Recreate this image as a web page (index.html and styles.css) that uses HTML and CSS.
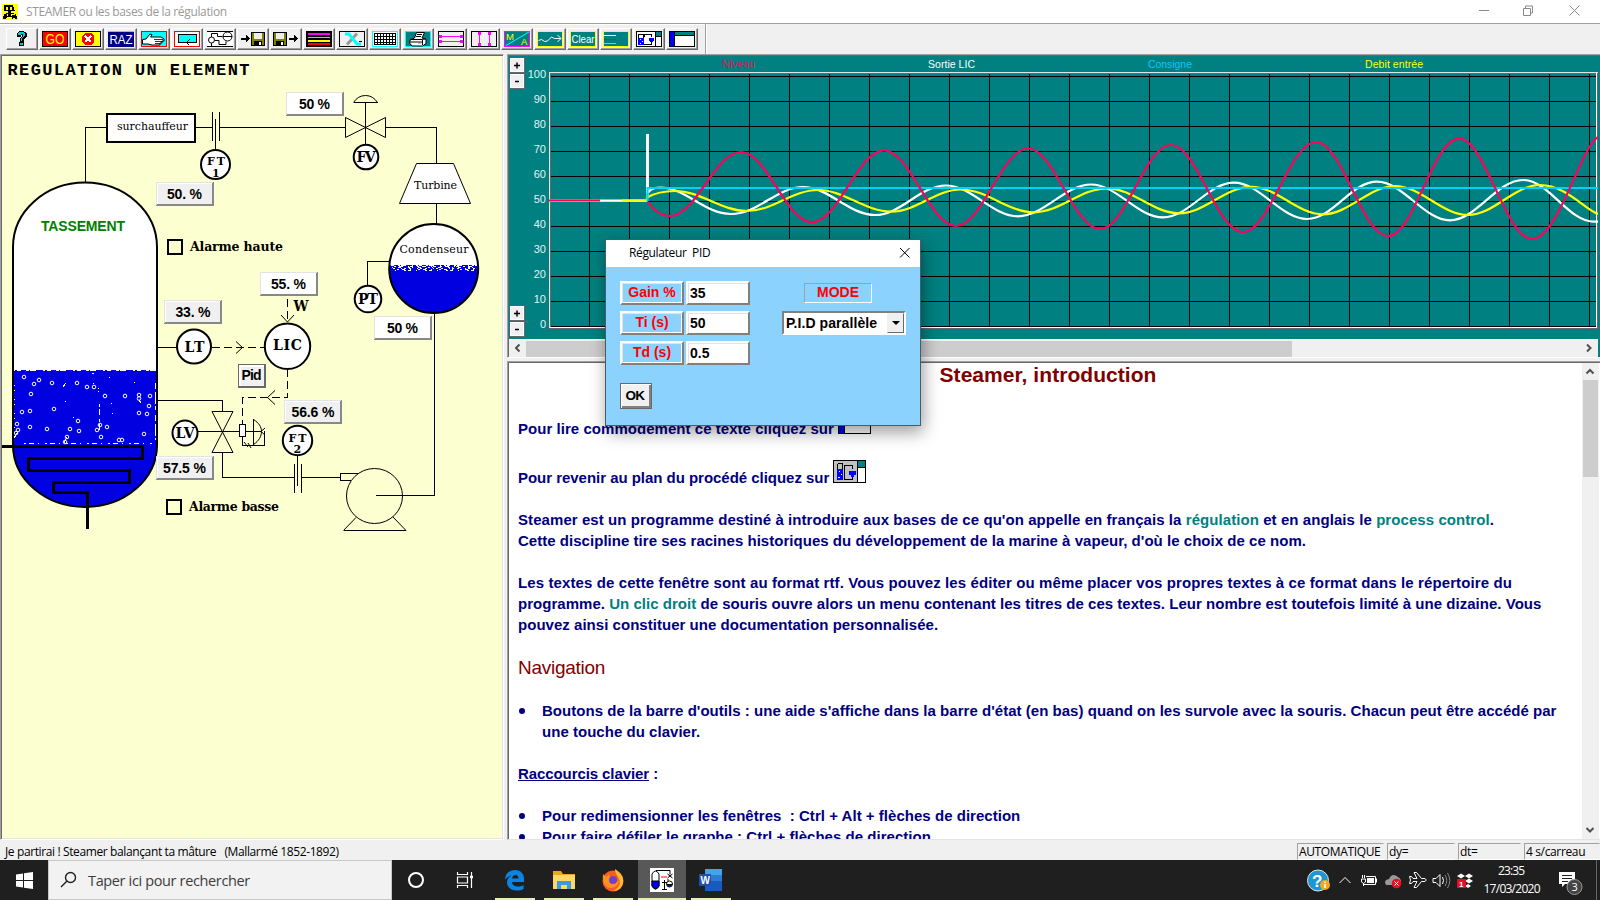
FILE: index.html
```html
<!DOCTYPE html>
<html lang="fr">
<head>
<meta charset="utf-8">
<title>STEAMER ou les bases de la régulation</title>
<link rel="stylesheet" href="styles.css">
</head>
<body>
<div class="screen">
<header class="titlebar">
  <svg class="app-icon" width="16" height="16" shape-rendering="crispEdges"><rect width="16" height="16" fill="#ff0"/><path d="M2 1h9v2H2zM6 3h2v3H6zM2 3h2v3H2zM10 3h2v4h-2zM2 6h11v1H2zM6 7h3v5H6zM4 9h8v1H4zM1 12h1v-2h3v4H4v1H1zM10 11h3v-1h1v2h1v3h-2v-1h-2v1h-1zM5 12h5v1H5z"/></svg>
  <span class="app-title">STEAMER ou les bases de la régulation</span>
  <svg class="win-controls" width="130" height="22" fill="none" stroke="#8a8a8a"><path d="M9 10.500h10M53.500 8.500h7v7h-7zM55.500 8v-2h7v7h-2M99.500 5.500l10 10M109.500 5.500l-10 10" transform="translate(0 -1)"/></svg>
</header>
<div class="toolbar">
  <div class="tools">
    <button class="tool"><svg viewBox="0 0 26 16"><path d="M8 5V2h1V1h1V0h5v1h2v1h1v4h-1v1h-1v1h-1v3h-4V7h1V6h1V4h-1v2H8zM10 11h5v4h-5z" fill="#000"/><path d="M9 4V2h1V1h5v1h1v3h-1v1h-1v1h-1v3h-1V7h1V6h1V3h-2v1zM11 12h3v2h-3z" fill="#0cc"/></svg></button>
    <button class="tool"><svg viewBox="0 0 26 16"><rect x=".5" y=".5" width="25" height="15" fill="red" stroke="#000"/><text x="3.500" y="13" class="t-go" textLength="19" lengthAdjust="spacingAndGlyphs">GO</text></svg></button>
    <button class="tool"><svg viewBox="0 0 26 16"><rect x=".5" y=".5" width="25" height="15" fill="#ff0" stroke="#000"/><path d="M10 2h6l3 3v6l-3 3h-6l-3-3V5z" fill="red"/><path d="M10 5l6 6M16 5l-6 6" stroke="#fff" stroke-width="2"/></svg></button>
    <button class="tool"><svg viewBox="0 0 26 16"><rect width="26" height="16" fill="#000080"/><path d="M0 .5h26" stroke="#0ff"/><text x="1.500" y="13" class="t-raz" textLength="23" lengthAdjust="spacingAndGlyphs">RAZ</text></svg></button>
    <button class="tool"><svg viewBox="0 0 26 16"><rect x=".5" y=".5" width="25" height="15" fill="#0ff" stroke="red"/><path class="aa" d="M1.500 8.500L5 8l4-5 2 .5L9.500 6H20l3 2v2h-2v2h-2v2h-8l-4-1H1.500z" fill="#fff" stroke="#000"/><path d="M13 8.500h9M14 10.500h7M14 12.500h5" stroke="#000" stroke-width=".8"/></svg></button>
    <button class="tool"><svg viewBox="0 0 26 16"><rect x=".5" y=".5" width="25" height="15" fill="#fff" stroke="red"/><rect x="4.500" y="3.500" width="18" height="8" fill="#0ff" stroke="#000"/><path d="M11 11.500h6M15.500 8.500l-3 3 3 3" stroke="#000" fill="none"/></svg></button>
    <button class="tool"><svg viewBox="0 0 26 16" class="aa"><rect width="26" height="16" fill="#fff"/><path d="M0 .5h26M0 15.500h26M8 9.500h4v4h7v-3M4.500 6V2.500h6v3h5M16 5.500h9" stroke="#000" fill="none"/><circle cx="4.500" cy="9" r="3" fill="#fff" stroke="#000"/><circle cx="20.500" cy="5.500" r="4.500" fill="none" stroke="#000"/><path d="M4.500 12v3" stroke="#000"/></svg></button>
    <button class="tool"><svg viewBox="0 0 26 16"><path d="M1 7h5V4h1v1h1v1h1v1h1v1H9v1H8v1H7v1H6V9H1z"/><rect x="11.500" y="1.500" width="13" height="13" fill="#808000" stroke="#000"/><path d="M14 2h8v6h-8z" fill="#eee"/><path d="M14 10h8v5h-8z"/><path d="M19 11h2v3h-2z" fill="#fff"/></svg></button>
    <button class="tool"><svg viewBox="0 0 26 16"><path d="M16 7h5V4h1v1h1v1h1v1h1v1h-1v1h-1v1h-1v1h-1V9h-5z"/><rect x=".5" y="1.500" width="13" height="13" fill="#808000" stroke="#000"/><path d="M3 2h8v6H3z" fill="#eee"/><path d="M3 10h8v5H3z"/><path d="M8 11h2v3H8z" fill="#fff"/></svg></button>
    <button class="tool"><svg viewBox="0 0 26 16"><rect width="26" height="16"/><path d="M2 3h22" stroke="#f0f" stroke-width="2"/><path d="M2 6.500h22" stroke="#0ff" stroke-width="1"/><path d="M2 10h22" stroke="#ff0" stroke-width="2"/><path d="M2 13h22" stroke="red" stroke-width="2"/></svg></button>
    <button class="tool"><svg viewBox="0 0 26 16"><rect x=".5" y=".5" width="25" height="15" fill="#f0f0f0" stroke="#000"/><g class="aa"><path d="M18 2.500L8 13.500" stroke="#999" stroke-width="3"/><path d="M6 3h4l8 10h4" stroke="#0ff" stroke-width="3" fill="none"/></g><path d="M20 10.500h3" stroke="#000"/></svg></button>
    <button class="tool"><svg viewBox="0 0 26 16"><rect x=".5" y=".5" width="25" height="15" fill="#fff" stroke="#0ff"/><path d="M2 2.500h22M2 5.500h22M2 8.500h22M2 11.500h22M2 13.500h22M2.500 2v12M5.500 2v12M8.500 2v12M11.500 2v12M14.500 2v12M17.500 2v12M20.500 2v12M23.500 2v12" stroke="#000"/></svg></button>
    <button class="tool"><svg viewBox="0 0 26 16"><rect x=".5" y=".5" width="25" height="15" fill="#008080" stroke="#0ff"/><g class="aa"><path d="M9.500 7l2-5.500h8L17 7l4 1.500v4L17.500 15H7l-2-2.500V9z" fill="#fff" stroke="#000"/><path d="M12 3.500h5M11 5.500h5M5.500 8.500h12l3-1M5.500 11h12M17.500 9v5" stroke="#000" fill="none"/><path d="M13 12.500h3" stroke="#dd0"/></g></svg></button>
    <button class="tool"><svg viewBox="0 0 26 16"><rect x=".5" y=".5" width="25" height="15" fill="#f0f0f0" stroke="#000"/><path d="M2 5.500h22M2 10.500h22" stroke="#f0f"/><path d="M1 4h3v3H1zM22 4h3v3h-3zM1 9h3v3H1zM22 9h3v3h-3z" fill="#f0f"/></svg></button>
    <button class="tool"><svg viewBox="0 0 26 16"><rect x=".5" y=".5" width="25" height="15" fill="#f0f0f0" stroke="#000"/><path d="M8.500 2v12M18.500 2v12" stroke="#f0f"/><path d="M7 1h3v3H7zM17 1h3v3h-3zM7 12h3v3H7zM17 12h3v3h-3z" fill="#f0f"/></svg></button>
    <button class="tool"><svg viewBox="0 0 26 16"><rect x=".5" y=".5" width="25" height="15" fill="#008080" stroke="#f0f"/><path class="aa" d="M2 14.500L25 1" stroke="#0ff"/><text x="2" y="9" class="t-ma">M</text><text x="17" y="14" class="t-ma">A</text></svg></button>
    <button class="tool"><svg viewBox="0 0 26 16"><rect x=".5" y=".5" width="25" height="15" fill="#008080" stroke="#ff0"/><path class="aa" d="M1.500 9.500l3-1 3 2 3-.5 4-4 3 1.500h6M20.500 4l3.500 3.500-3.500 3.500" stroke="#fff" fill="none"/></svg></button>
    <button class="tool"><svg viewBox="0 0 26 16"><rect x=".5" y=".5" width="25" height="15" fill="#008080" stroke="#ff0"/><text x="1.500" y="12" class="t-clear" textLength="23" lengthAdjust="spacingAndGlyphs">Clear</text></svg></button>
    <button class="tool"><svg viewBox="0 0 26 16"><rect x=".5" y=".5" width="25" height="15" fill="#008080" stroke="#ff0"/><path d="M1 4.500h12" stroke="#fff"/><path d="M1 8.500h12" stroke="red"/><path d="M1 12.500h12" stroke="#0ff"/></svg></button>
    <button class="tool"><svg viewBox="0 0 26 16"><rect x=".5" y=".5" width="25" height="15" fill="#fff" stroke="#000"/><path d="M20 1h5v4h-5z" fill="#008080"/><path d="M19.500 1v14M20 5.500h5M8 5.500V3.500h7V6M8 13.500h7V11" stroke="#000" fill="none"/><rect x="2.500" y="3.500" width="5" height="10" fill="#fff" stroke="#000"/><path d="M2 7h6v7H2zM13 7h5v3h-1v1h-3v-1h-1z" fill="#00f"/><path d="M4 8h1v1H4zM6 10h1v1H6zM4 12h1v1H4z" fill="#fff"/></svg></button>
    <button class="tool"><svg viewBox="0 0 26 16"><rect x=".5" y=".5" width="25" height="15" fill="#fff" stroke="#000"/><path d="M1 1h4v14H1z" fill="#00f"/><path d="M6 1h19v3H6z" fill="#008080"/><path d="M5.500 1v14M6 4.500h19" stroke="#000"/></svg></button>
  </div>
</div>
<main class="work">
<section class="process">
<svg width="500" height="783" viewBox="2 56 500 783">
  <text class="title" x="7.500" y="74.500" textLength="242">REGULATION UN ELEMENT</text>
  <path d="M13 247A72 64.500 0 0 1 157 247V445A72 62 0 0 1 13 445Z" fill="#fff"/>
  <path d="M13 371H157V445A72 62 0 0 1 13 445Z" fill="#0000e0"/>
  <path d="M15 370.500H155" stroke="#0000e0" stroke-dasharray="2 4 5 3 1 6 7 2" shape-rendering="crispEdges"/>
  <g class="specks" fill="none" stroke="#fff" shape-rendering="crispEdges">
    <path d="M24 443.500H154" stroke-dasharray="2 3 5 4 1 6"/><path d="M155.500 383V440" stroke-dasharray="6 3 12 2 4 5"/><path d="M99.500 404V430" stroke-dasharray="3 2 6 4"/><path d="M14.500 385V436" stroke-dasharray="1 4 1 8"/><path d="M66 383l-3 4M75 382h1M92 373h2M98 388h1M109 377h1M65 401h1M134 382h1M111 403h1M112 413h1M73 417h1M98 391h1M93 383h1M18 432l-4 6M67 437l-3 6M139 400l2 3"/>
  </g>
  <g class="bubbles"><circle cx="24" cy="377" r="1.800"/><circle cx="34" cy="384" r="1.800"/><circle cx="39" cy="380" r="1.800"/><circle cx="52" cy="383" r="1.800"/><circle cx="31" cy="394" r="1.800"/><circle cx="77" cy="383" r="1.800"/><circle cx="87" cy="387" r="1.800"/><circle cx="94" cy="387" r="1.800"/><circle cx="105" cy="396" r="1.800"/><circle cx="125" cy="396" r="1.800"/><circle cx="139" cy="395" r="1.800"/><circle cx="139" cy="398.500" r="1.800"/><circle cx="150" cy="396" r="1.800"/><circle cx="149" cy="406" r="1.800"/><circle cx="54" cy="409" r="1.800"/><circle cx="22" cy="412" r="1.800"/><circle cx="30" cy="411" r="1.800"/><circle cx="139" cy="413" r="1.800"/><circle cx="147" cy="414" r="1.800"/><circle cx="78" cy="421" r="1.800"/><circle cx="17" cy="424" r="1.800"/><circle cx="18" cy="430" r="1.800"/><circle cx="16" cy="433" r="1.800"/><circle cx="30" cy="427" r="1.800"/><circle cx="47" cy="429" r="1.800"/><circle cx="70" cy="429" r="1.800"/><circle cx="79" cy="431" r="1.800"/><circle cx="100" cy="425" r="1.800"/><circle cx="97" cy="430" r="1.800"/><circle cx="107" cy="427" r="1.800"/><circle cx="144" cy="434" r="1.800"/><circle cx="67" cy="437" r="1.800"/><circle cx="101" cy="437" r="1.800"/><circle cx="119" cy="440" r="1.800"/><circle cx="122" cy="440" r="1.800"/><circle cx="65" cy="442" r="1.800"/></g>
  <path d="M13 247A72 64.500 0 0 1 157 247V445A72 62 0 0 1 13 445Z" class="ln2"/>
  <path d="M2 446.500H142V458.500H28.500V470.500H129.500V482.500H53.500V492.500H87.500V529" fill="none" stroke="#000" stroke-width="3" shape-rendering="crispEdges"/>
  <g class="ln">
    <path d="M85.500 182V127.500H106M196 127.500H212.500M212.500 112V141M219.500 112V141M215.500 119V150M220 127.500H345.500M365.500 102V144M353.500 102.500H378M386 127.500H436.500V163M436.500 203V224M389 261.500H367.500V286M434.500 314V495.500H376M157 347.500H177M157 400.500H222.500V411M198 431.500H261M222.500 452V477.500H294.500M294.500 464V493M301.500 464V493M297.500 455V486M302 477.500H340.500M358 473.500H340.500V480.500H351M343.500 530.500H406M242.500 437V445.500H264.500V431M253.500 419V445"/>
  </g>
  <g class="lna">
    <path d="M345.500 117.500V137.500L385.500 117.500V137.500ZM353.500 102.500Q358 95.500 365.500 95.500T377.500 102.500M212 411.500H233L212 452.500H233ZM356 517.500L343.500 530.500M393 517L406 530.500M253.500 419.500C259 423 261.500 427 261.500 431.500S259 441 253.500 444.500M236 341.500L242.500 347.500 236 353.500M281 315L287.500 322 294 315M275 390.500L267.500 397.500 275 404.500M265 428l-4 3.500 4 3.500M244 442l4 5M248 443l3 5"/>
    <ellipse cx="374.500" cy="496" rx="28" ry="27.500"/>
  </g>
  <g class="ln" stroke-dasharray="8 4"><path d="M212 347.500H264M287.500 299V322M287.500 369V397.500H242.500V424"/></g>
  <rect x="239.500" y="424.500" width="6" height="12" fill="#fff" stroke="#000"/>
  <rect x="107" y="114" width="88" height="28" fill="#fff" stroke="#000" stroke-width="2"/>
  <path d="M416.500 163.500H453.500L470.500 203.500H399.500Z" fill="#fff" stroke="#000"/>
  <circle cx="433.700" cy="268.500" r="44.500" fill="#fff"/>
  <path d="M389.300 271H478.100A44.500 44.500 0 0 1 389.300 271Z" fill="#0000e0"/>
  <g stroke="#0000e0" shape-rendering="crispEdges"><path d="M390 265.500H478" stroke-dasharray="1 3 4 2 1 5 6 1 3 2"/><path d="M390 266.500H478" stroke-dasharray="4 2 3 4 5 1 1 3"/><path d="M390 267.500H478" stroke-dasharray="2 1 5 3 7 2"/><path d="M390 268.500H478" stroke-dasharray="3 2 6 1 2 2"/><path d="M390 269.500H478" stroke-dasharray="7 2 3 3 5 1"/><path d="M390 270.500H478" stroke-dasharray="5 1 8 2 2 3"/></g>
  <g class="inst"><circle class="hollow" cx="433.700" cy="268.500" r="44.500"/><circle cx="215.500" cy="164.500" r="14.500"/><circle cx="366" cy="157" r="12.300"/><circle cx="368" cy="299" r="13.300"/><circle cx="194" cy="346.500" r="17"/><circle cx="287.500" cy="346.300" r="22.700"/><circle cx="185" cy="433" r="12.500"/><circle cx="297.500" cy="440.500" r="14.700"/><rect class="hollow" x="168" y="240" width="14" height="14"/><rect class="hollow" x="167" y="500" width="14" height="14"/></g>
  <g class="ser">
    <g class="thin"><text x="117" y="130" textLength="71">surchauffeur</text><text x="414" y="189" textLength="43">Turbine</text><text x="399.500" y="253" textLength="69">Condenseur</text></g>
    <g class="s12"><text x="207" y="165" textLength="18">FT</text><text x="212" y="176.500">1</text><text x="288.500" y="441.500" textLength="18">FT</text><text x="293.500" y="453">2</text></g>
    <g class="s14"><text x="356.500" y="162" textLength="19">FV</text><text x="358" y="304" textLength="20">PT</text><text x="184.500" y="352" textLength="20">LT</text><text x="273" y="350" textLength="29">LIC</text><text x="175.500" y="437.500" textLength="19">LV</text><text x="293.500" y="311" textLength="15" lengthAdjust="spacingAndGlyphs">W</text></g>
    <g class="s13"><text x="190" y="251" textLength="93">Alarme haute</text><text x="189" y="511" textLength="90">Alarme basse</text></g>
  </g>
  <text x="41" y="231" class="tass" textLength="84">TASSEMENT</text>
  <defs><g id="box"><path d="M0 24V0H58V24Z" fill="#888"/><path d="M0 0H57V1H1V23H0Z" fill="#e3e3e3"/><path d="M1 1H56V22H1Z" fill="#fff"/></g></defs>
  <g class="vals">
    <use href="#box" x="286" y="92"/><use href="#box" x="260" y="272"/><use href="#box" x="374" y="316"/>
    <use href="#box" x="156" y="182"/><path d="M158 184h54v20h-54z"/><use href="#box" x="164" y="300"/><path d="M166 302h54v20h-54z"/><use href="#box" x="156" y="456"/><path d="M158 458h54v20h-54z"/><use href="#box" x="284" y="400"/><path d="M286 402h54v20h-54z"/>
    <text x="299" y="109" textLength="31">50 %</text><text x="271" y="289" textLength="35">55. %</text><text x="387" y="333" textLength="31">50 %</text><text x="167" y="199" textLength="35">50. %</text><text x="175.500" y="317" textLength="35">33. %</text><text x="163" y="473" textLength="43">57.5 %</text><text x="291.500" y="417" textLength="43">56.6 %</text>
    <path class="pb-edge" d="M238 364h28v24h-28z"/><path class="pb-hi" d="M239 365h25v21h-25z"/><path d="M241 367h23v19h-23z"/><text x="241.500" y="380" textLength="20">Pid</text>
  </g>
</svg>
</section>
<div class="right">
<section class="trend">
<svg width="1089" height="283" viewBox="509 56 1089 283">
  <defs><pattern id="grid" x="589" y="76" width="40" height="25" patternUnits="userSpaceOnUse"><path d="M.5 0V25M0 .5H40" stroke="#000" shape-rendering="crispEdges"/></pattern>
  <g id="step"><path d="M0 0h15v15H0z" fill="#696969"/><path d="M0 0h14v14H0z" fill="#fff"/><path d="M1 1h12v12H1z" fill="#f0f0f0"/></g></defs>
  <rect x="551" y="73" width="1046" height="254" fill="url(#grid)"/>
  <g fill="none" shape-rendering="crispEdges"><path d="M549.500 328V72.500H1597.500" stroke="#e3e3e3"/><path d="M550.500 327V73.500H1597" stroke="#696969"/><path d="M550 327.500H1596.500V73" stroke="#fff"/><path d="M549 328.500H1597.500V73" stroke="#696969"/></g>
  <g class="curves">
    <path stroke="#fff" d="M549 200.500H647M647.500 196V134.500V193L651 189.500C654 188 657 187.500 660 187.500C686 187.500 704 214 731 214S777 187 803 187 849 215 875 215 920 185.500 946 185.500 992 216.300 1018 216.300 1065 184.500 1091 184.500 1137 217.300 1163 217.300 1208 182.700 1234 182.700 1281 219 1307 219 1351 181.700 1377 181.700 1424 220.300 1450 220.300 1497 180 1523 180 1568 221.700 1594 221.700H1598"/>
    <path stroke="#fff" stroke-width="3" d="M647.500 134V193"/>
    <path stroke="#ff0" d="M622 200.500H647V197.500C655 193 665 191 675 191C701 191 721 211 747 211S792 190 818 190 865 211.700 891 211.700 935 189.500 961 189.500 1008 212.300 1034 212.300 1081 188.300 1107 188.300 1153 213.300 1179 213.300 1225 186.800 1251 186.800 1297 214.300 1323 214.300 1369 186 1395 186 1442 215 1468 215 1514 185 1540 185C1566 185 1585 210 1598 214"/>
    <path stroke="#00d2ff" d="M647.500 201V188H1598"/>
    <path stroke="#ff0" stroke-width="1" d="M549 201.500H647"/>
    <path stroke="#ff005a" d="M549 200.500H600M648 202C654 211 661 216 670 216C696 216 715 152 741 152S786 222.300 812 222.300 858 150.300 884 150.300 930 226 956 226 1002 148.500 1028 148.500 1074 229 1100 229 1145 145 1171 145 1217 232.300 1243 232.300 1290 142 1316 142 1362 236 1388 236 1433 138.700 1459 138.700 1506 239 1532 239C1558 239 1580 148 1598 137"/>
  </g>
  <g class="leg"><text x="722" y="68" textLength="33" fill="#d8185c">Niveau</text><text x="928" y="68" textLength="47" fill="#fff">Sortie LIC</text><text x="1148" y="68" textLength="44" fill="#00c8ff">Consigne</text><text x="1365" y="68" textLength="58" fill="#ff0">Debit entrée</text></g>
  <g class="axis"><text x="546" y="78">100</text><text x="546" y="103">90</text><text x="546" y="128">80</text><text x="546" y="153">70</text><text x="546" y="178">60</text><text x="546" y="203">50</text><text x="546" y="228">40</text><text x="546" y="253">30</text><text x="546" y="278">20</text><text x="546" y="303">10</text><text x="546" y="328">0</text></g>
  <use href="#step" x="510" y="58"/><use href="#step" x="510" y="74"/><use href="#step" x="510" y="306"/><use href="#step" x="510" y="322"/>
  <path d="M514 65.500h6M517 62.500v6M515 81.500h4M514 313.500h6M517 310.500v6M515 329.500h4" stroke="#000" stroke-width="1.500"/>
</svg>
<div class="hscroll"><svg width="17" height="17"><path d="M10.500 4.500L7 8l3.500 3.500"/></svg><i class="hthumb"></i><svg width="17" height="17"><path d="M6 4.500L9.500 8 6 11.500"/></svg></div>
</section>
<article class="doc">
  <div class="doc-text">
    <h1>Steamer, introduction</h1>
    <p class="ico-line l1">Pour lire commodément ce texte cliquez sur <svg width="33" height="23"><rect x=".5" y=".5" width="32" height="22" fill="#fff" stroke="#000"/><path d="M1 1h5v21H1z" fill="#00f"/><path d="M6.500 1v21" stroke="#000"/></svg></p>
    <p class="ico-line l2">Pour revenir au plan du procédé cliquez sur <svg width="33" height="23" shape-rendering="crispEdges"><rect x=".5" y=".5" width="32" height="22" fill="#c0c0c0" stroke="#000"/><path d="M25 8h7v14h-7z" fill="#fff"/><path d="M25 1h7v6h-7z" fill="#008080"/><path d="M24.500 1v21M25 7.500h7M4.500 9V4.500L5.500 3.500h4V9M11.500 19V5.500h8V9M11 19.500h8V17" fill="none" stroke="#000"/><path d="M4 9h6v11H4zM16 11h7v4h-2v2h-3v-2h-2z" fill="#00f"/><path d="M6 11h1v1H6zM8 14h1v1H8zM5 17h2v1H5z" fill="#fff"/></svg></p>
    <p><span class="loose">Steamer est un programme destiné à introduire aux bases de ce qu'on appelle en français la <em>régulation</em> et en anglais le <em>process control</em>.</span><br>Cette discipline tire ses racines historiques du développement de la marine à vapeur, d'où le choix de ce nom.</p>
    <p><span class="looser">Les textes de cette fenêtre sont au format rtf. Vous pouvez les éditer ou même placer vos propres textes à ce format dans le répertoire du</span><br>programme. <em>Un clic droit</em> de souris ouvre alors un menu contenant les titres de ces textes. Leur nombre est toutefois limité à une dizaine. Vous<br>pouvez ainsi constituer une documentation personnalisée.</p>
    <h2>Navigation</h2>
    <ul><li>Boutons de la barre d'outils : une aide s'affiche dans la barre d'état (en bas) quand on les survole avec la souris. Chacun peut être accédé par<br>une touche du clavier.</li></ul>
    <p><u>Raccourcis clavier</u> :</p>
    <ul><li>Pour redimensionner les fenêtres&nbsp; : Ctrl + Alt + flèches de direction</li><li>Pour faire défiler le graphe : Ctrl + flèches de direction</li></ul>
  </div>
  <div class="vscroll"><svg width="17" height="17"><path d="M4.500 10.500L8 7l3.500 3.500"/></svg><i class="vthumb"></i><svg width="17" height="17"><path d="M4.500 6L8 9.500 11.500 6"/></svg></div>
</article>
</div>
</main>
<footer class="status"><span class="msg">Je partirai ! Steamer balançant ta mâture &nbsp; (Mallarmé 1852-1892)</span><span class="cell c1">AUTOMATIQUE</span><span class="cell c2">dy=</span><span class="cell c3">dt=</span><span class="cell c4">4 s/carreau</span></footer>
<nav class="taskbar">
  <div class="start"><svg width="17" height="17" fill="#fff"><path d="M0 2.400L7 1.400V8H0zM8 1.300L17 0V8H8zM0 9H7V15.600L0 14.600zM8 9H17V17L8 15.700z"/></svg></div>
  <div class="search"><svg width="18" height="18" fill="none" stroke="#222" stroke-width="1.400"><circle cx="10.500" cy="6.500" r="5"/><path d="M7 10L1 16"/></svg><span>Taper ici pour rechercher</span></div>
  <div class="apps">
    <div class="app"><svg width="18" height="18"><circle cx="9" cy="9" r="7" fill="none" stroke="#fff" stroke-width="2"/></svg></div>
    <div class="app"><svg width="18" height="18" fill="none" stroke="#fff" stroke-width="1.200"><path d="M1.500 1v2.500h10V1M1.500 6h10v6h-10zM1.500 17v-2.500h10V17M15.500 1v16"/><path d="M14 6h3" stroke-width="2.500"/></svg></div>
    <div class="app run"><svg width="22" height="22"><path d="M1 11C1 5 5 1 11 1c6 0 9 4 9 9v3H8c0 3 3 4.500 6 4.500 2 0 4-.5 5.500-1.500v4c-2 1-4 1.500-6.500 1.500C7 21.500 3 18 3 13.500 3 10 5 7.500 8 6.500 4.500 7 2 9 1 11zM8 9.500h6.500C14.500 7 13 6 11.500 6S8.500 7 8 9.500z" fill="#0a84e0"/></svg></div>
    <div class="app run"><svg width="23" height="20"><path d="M0 1h8l2 3h12v15H0z" fill="#e8a91e"/><path d="M0 5h22v14H0z" fill="#ffd766"/><path d="M4 19v-8h14v8h-4v-4H8v4z" fill="#3a9be0"/></svg></div>
    <div class="app run"><svg width="24" height="24"><circle cx="12" cy="13" r="10.500" fill="#ff5a1f"/><path d="M14 1c6 4 9 8 8 14-1 5-5 8-10 8 6-3 8-7 6-12-1-3-4-5-4-10z" fill="#ffbd2e"/><path d="M2 6l3 3 3-3c0 3 2 3 5 4l-3 3c4 3 7 0 8 0-1 5-5 7-8 7-6 0-9-6-8-14z" fill="#ff9020"/><circle cx="12" cy="12" r="4" fill="#7540c8"/></svg></div>
    <div class="app run active"><svg width="24" height="24" fill="none" stroke="#000"><rect width="24" height="24" fill="#fff" stroke="none"/><path d="M2 6q3.500-6 7 0v12q-3.500 6-7 0z"/><path d="M2 13h7v5q-3.500 6-7 0z" fill="#00e"/><path d="M6 2.500h14v4M17.500 6l5 4M22.500 6l-5 4M14.500 12v9M12 21.500h5M12 14.500h5M18 11v2" /><circle cx="19.500" cy="16" r="3"/><path d="M17 16.500h5q-2.500 4-5 0" fill="#00e"/><path d="M11.500 9h5" stroke="red" stroke-width="2" stroke-dasharray="1 1"/></svg></div>
    <div class="app run"><svg width="24" height="24"><path d="M6 1h17v22H6z" fill="#41a5ee"/><path d="M6 7h17v6H6z" fill="#2b7cd3"/><path d="M6 13h17v10H6z" fill="#185abd"/><path d="M0 6h12v12H0z" fill="#1f4fa8"/><text x="1.500" y="15.500" class="t-w">W</text></svg></div>
  </div>
  <div class="tray">
    <svg width="290" height="40" viewBox="1300 860 290 40" fill="none" stroke="#fff">
      <circle cx="1318" cy="880.500" r="10.500" fill="#1e96d2" stroke="#e8e8e8"/><text x="1312" y="887" class="t-q">?</text><circle cx="1325" cy="885" r="5" fill="#f0a81e" stroke="none"/><path d="M1325 881.500v1.500M1325 884v4" stroke-width="1.500"/>
      <path d="M1339.500 883l5.500-5.500 5.500 5.500"/>
      <path d="M1366 876.500h9.500v8H1364M1376.500 878.500v4M1361.500 879v3q2 3 4 0v-3zM1362.500 875v3M1364.500 875v3M1363.500 883v3"/><path d="M1367 878h7v5h-7z" fill="#fff" stroke="none"/>
      <path d="M1386 885q-3-5 3-6 3-7 9-2 4 2 3 8z" fill="#999" stroke="none"/><circle cx="1396.500" cy="883.500" r="4.800" fill="#e81123" stroke="none"/><path d="M1394.500 881.500l4 4M1398.500 881.500l-4 4"/>
      <path d="M1409.500 876.500h2l1.500 2h4l-3-6h2.500l5 6h3.500q2.500 1.500 0 3h-3.500l-5 6h-2.500l3-6h-4l-1.500 2h-2l1-3.500z"/>
      <path d="M1433 878.500h3l4-4v12l-4-4h-3zM1442.500 877q2 3.500 0 7"/><path d="M1445 875q3.500 5.500 0 11M1447.500 873q4.500 7.500 0 15" stroke="#888"/>
      <path d="M1457 876l4-2.500 4 2.500-4 2.500zM1465 876l4-2.500 4 2.500-4 2.500zM1465 881l4-2.500 4 2.500-4 2.500zM1465 886l3-2 3 2-3 2z" fill="#fff" stroke="none"/><rect x="1457" y="879" width="9" height="9" fill="#e0102a" stroke="none"/><text x="1459" y="887" class="t-1">1</text>
      <text x="1498" y="875" class="t-clk" textLength="27">23:35</text><text x="1483.500" y="893" class="t-clk" textLength="57">17/03/2020</text>
      <path d="M1559 872h16v12h-10l-3 3v-3h-3z" fill="#fff" stroke="none"/><path d="M1562 875.500h10M1562 878.500h10M1562 881.500h6" stroke="#222"/><circle cx="1574.500" cy="887" r="7.500" fill="#444" stroke="#999"/><text x="1571.500" y="891" class="t-3">3</text>
    </svg><i class="peek"></i>
  </div>
</nav>
<section class="dialog">
  <div class="dlg-title"><span>Régulateur&nbsp; PID</span><svg width="12" height="12"><path d="M1 1l9.500 9.500M10.500 1L1 10.500" stroke="#000"/></svg></div>
  <div class="dlg-body">
    <div class="fields"><label>Gain %</label><span class="inp">35</span><label>Ti (s)</label><span class="inp">50</span><label>Td (s)</label><span class="inp">0.5</span></div>
    <div class="mode"><span class="mode-h">MODE</span><span class="sel">P.I.D parallèle<b class="drop"></b></span></div>
    <button class="ok">OK</button>
  </div>
</section>
</div>
</body>
</html>
```
FILE: styles.css
```css
* { box-sizing: border-box; }
body { margin: 0; overflow: hidden; }
svg { display: block; flex: none; }
.screen { position: relative; width: 1600px; height: 900px; display: flex; flex-direction: column; background: #f0f0f0; font-family: "Open Sans", "Noto Sans", sans-serif; font-size: 12px; letter-spacing: -.36px; color: #000; overflow: hidden; }
.titlebar { height: 23px; background: #fff; display: flex; align-items: center; padding-left: 2px; flex: none; }
.app-title { margin-left: 8px; color: #999; }
.win-controls { margin-left: auto; }
.toolbar { height: 31px; flex: none; border-top: 1px solid #a0a0a0; display: flex; }
.tools { display: flex; gap: 1px; padding: 4px 0 0 6px; width: 706px; border-right: 1px solid #a0a0a0; height: 30px; box-shadow: 1px 0 #fff, inset 0 1px #fff; }
.tool { width: 32px; height: 22px; margin: 0; padding: 0 0 0 2px; border: 1px solid; border-color: #fff #696969 #696969 #fff; background: #f0f0f0; box-shadow: inset -1px -1px #a0a0a0; display: flex; align-items: flex-start; padding-top: 2px; letter-spacing: 0; }
.tool svg { width: 26px; height: 16px; shape-rendering: crispEdges; }
.tool .aa, .tool svg.aa { shape-rendering: auto; }
.t-go { font: 14px "Liberation Sans", sans-serif; fill: #ff0; }
.t-raz { font: 13px "Liberation Sans", sans-serif; fill: #fff; }
.t-ma { font: 9.500px "Liberation Sans", sans-serif; fill: #ff0; }
.t-clear { font: 11.500px "Liberation Sans", sans-serif; fill: #fff; }
.work { display: flex; height: 786px; flex: none; }
.process { width: 504px; height: 786px; border: 1px solid; border-color: #a0a0a0 #fff #fff #a0a0a0; background: #fcffd0; box-shadow: inset 1px 1px #696969, inset -1px -1px #e3e3e3; padding: 1px 0 0 1px; letter-spacing: 0; }
.right { margin-left: 3px; width: 1093px; display: flex; flex-direction: column; letter-spacing: 0; }
.trend { height: 304px; background: #008080; border: 1px solid; border-color: #a0a0a0 #fff #fff #a0a0a0; border-right: 0; box-shadow: inset 1px 1px #696969; padding: 1px 0 0 1px; }
.doc { margin-top: 3px; height: 479px; background: #fff; border: 1px solid; border-color: #a0a0a0 #fff #e3e3e3 #a0a0a0; border-right: 0; box-shadow: inset 1px 1px #696969; padding: 1px 0 0 1px; display: flex; overflow: hidden; }
.ser { font-family: "DejaVu Serif", serif; font-weight: bold; }
.title { font: bold 17px "Liberation Mono", monospace; }
.thin { font-size: 11px; font-weight: normal; }
.s12 { font-size: 11px; }
.s13 { font-size: 12.500px; }
.s14 { font-size: 14px; }
.tass { font: bold 14px "Liberation Sans", sans-serif; fill: #008000; }
.vals { fill: #f0f0f0; }
.vals text { font: bold 14px "Liberation Sans", sans-serif; fill: #000; }
.pb-edge { fill: #696969; }
.pb-hi { fill: #fff; }
.ln { fill: none; stroke: #000; shape-rendering: crispEdges; }
.lna { fill: none; stroke: #000; }
.ln2 { fill: none; stroke: #000; stroke-width: 2; }
.inst { fill: #fff; stroke: #000; stroke-width: 2; }
.inst .hollow { fill: none; }
.bubbles { fill: none; stroke: #fff; stroke-width: 1; }
.curves { fill: none; stroke-width: 2.200; }
.leg { font: 10.500px "Liberation Sans", sans-serif; }
.axis { font: 11px "Liberation Sans", sans-serif; fill: #e0f4f4; text-anchor: end; }
.hscroll { height: 18px; width: 1089px; background: #f0f0f0; display: flex; align-items: center; border-top: 1px solid #fff; }
.hscroll svg, .vscroll svg { fill: none; stroke: #505050; stroke-width: 2; }
.hthumb { width: 766px; height: 16px; background: #cdcdcd; margin-right: auto; }
.vscroll { width: 17px; height: 476px; background: #f0f0f0; flex: none; display: flex; flex-direction: column; }
.vthumb { width: 15px; height: 97px; background: #cdcdcd; margin: 0 0 auto 1px; }
.doc-text { width: 1073px; height: 476px; overflow: hidden; padding-left: 9px; font: bold 15px/21px "Liberation Sans", sans-serif; letter-spacing: .03px; color: #000080; white-space: nowrap; }
.loose { letter-spacing: .071px; }
.looser { letter-spacing: .107px; }
.doc-text h1 { margin: 0; height: 55px; padding-right: 4px; font-size: 21px; line-height: 24px; color: #800000; text-align: center; letter-spacing: .05px; }
.doc-text p, .doc-text ul { margin: 0 0 21px; padding: 0; }
.doc-text .ico-line { margin: 0; display: flex; gap: 4px; }
.doc-text .l1 { height: 49px; letter-spacing: .04px; }
.doc-text .l2 { height: 42px; letter-spacing: -.03px; }
.ico-line svg { margin-top: -7px; }
.doc-text em { font-style: normal; color: #008080; }
.doc-text h2 { margin: 0; height: 44px; font-weight: normal; font-size: 19px; line-height: 24px; color: #800000; letter-spacing: -.28px; }
.doc-text u { letter-spacing: -.09px; }
.doc-text li { list-style: none; padding-left: 24px; position: relative; }
.doc-text li::before { content: ""; position: absolute; left: 1px; top: 8px; width: 6px; height: 6px; border-radius: 50%; background: #000080; }
.status { height: 20px; flex: none; display: flex; padding-top: 3px; line-height: 17px; }
.msg { width: 1297px; padding-left: 5px; letter-spacing: -.38px; }
.cell { border: 1px solid; border-color: #a0a0a0 #f0f0f0 #fff #a0a0a0; margin-right: 3px; padding-left: 1px; line-height: 16px; }
.c1 { width: 87px; }
.c2 { width: 68px; }
.c3 { width: 63px; }
.c4 { width: 76px; margin: 0; white-space: nowrap; }
.taskbar { height: 40px; flex: none; background: #1f1f1f; display: flex; }
.start { width: 48px; display: grid; place-items: center; }
.search { width: 344px; background: #f2f2f2; border: 1px solid #c8c8c8; display: flex; align-items: center; padding-left: 11px; gap: 10px; font-size: 14.500px; color: #3c3c3c; }
.apps { display: flex; }
.app { width: 48px; height: 40px; margin-right: 1px; display: grid; place-items: center; position: relative; }
.app:nth-child(2) { margin-right: 2px; }
.app.run::after { content: ""; position: absolute; left: 4px; right: 4px; bottom: 0; height: 2px; background: #e4efb0; }
.app.active { background: #585858; }
.app.active::after { left: 0; right: 0; }
.t-w { font: bold 10px "Liberation Sans", sans-serif; fill: #fff; letter-spacing: 0; }
.tray { margin-left: auto; display: flex; gap: 6px; letter-spacing: 0; }
.tray text { fill: #fff; stroke: none; }
.t-q { font: bold 17px "Liberation Sans", sans-serif; }
.t-1 { font: bold 8px "Liberation Sans", sans-serif; }
.t-clk { font: 12px "Open Sans", sans-serif; }
.t-3 { font: 11px "Open Sans", sans-serif; }
.peek { width: 4px; border-left: 1px solid #666; }
.dialog { position: absolute; left: 605px; top: 239px; width: 316px; height: 187px; border: 1px solid #4a5a66; background: #8cd2ff; box-shadow: 2px 6px 16px rgba(0,0,0,.4); }
.dlg-title { height: 27px; background: #fff; display: flex; align-items: center; justify-content: space-between; padding: 0 9px 2px 23px; letter-spacing: -.35px; }
.dlg-body { padding: 14px 14px 0; font: bold 14px "Liberation Sans", sans-serif; letter-spacing: 0; display: grid; grid-template-columns: 132px 124px; column-gap: 30px; }
.fields { display: grid; grid-template-columns: 64px 64px; column-gap: 2px; row-gap: 6px; }
.fields label, .inp { height: 24px; border: 2px solid; border-color: #fff #808080 #808080 #fff; line-height: 19px; box-shadow: inset 1px 1px #e3e3e3, inset -1px -1px #fff; }
.fields label { color: #f00; text-align: center; }
.inp { background: #fff; padding-left: 2px; line-height: 20px; }
.mode { display: flex; flex-direction: column; }
.mode-h { margin: 2px 0 8px 22px; width: 68px; height: 20px; border: 1px solid; border-color: #a0a0a0 #fff #fff #a0a0a0; color: #f00; text-align: center; line-height: 17px; }
.sel { height: 24px; background: #fff; border: 2px solid; border-color: #808080 #fff #fff #808080; display: flex; justify-content: space-between; line-height: 20px; padding-left: 2px; white-space: nowrap; letter-spacing: .07px; }
.drop { width: 17px; height: 20px; border: 1px solid; border-color: #f0f0f0 #696969 #696969 #f0f0f0; background: #f0f0f0; display: grid; place-items: center; }
.drop::before { content: ""; border: 4px solid transparent; border-top-color: #000; border-bottom: 0; }
.ok { margin: 18px 0 0; width: 32px; height: 26px; padding: 0 2px 2px 0; border: 1px solid #696969; background: #f0f0f0; box-shadow: inset 1px 1px #fff, inset -2px -2px #808080; font: bold 13.500px "Liberation Sans", sans-serif; letter-spacing: -.6px; }
```
